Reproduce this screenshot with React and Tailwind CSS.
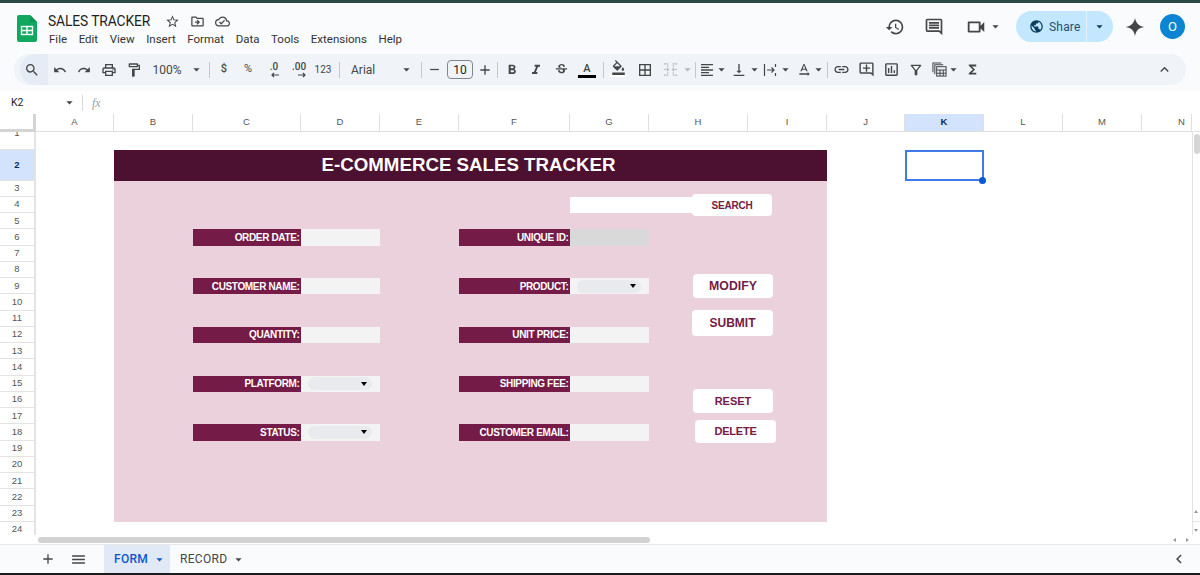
import React from "react";
import {
  MdSearch, MdUndo, MdRedo, MdOutlinePrint, MdOutlineFormatPaint, MdArrowDropDown, MdRemove, MdAdd,
  MdFormatBold, MdFormatItalic, MdStrikethroughS, MdOutlineFormatColorFill, MdBorderAll, MdFormatAlignLeft,
  MdVerticalAlignBottom, MdTextRotationNone, MdLink, MdOutlineAddComment, MdOutlineInsertChart, MdOutlineFilterAlt,
  MdFunctions, MdKeyboardArrowUp, MdHistory, MdOutlineInsertComment, MdOutlineVideocam, MdPublic, MdStarBorder,
  MdOutlineDriveFileMove, MdOutlineCloudDone, MdMenu, MdChevronLeft,
} from "react-icons/md";

const COLS = ["A", "B", "C", "D", "E", "F", "G", "H", "I", "J", "K", "L", "M", "N"];
const MENU = ["File", "Edit", "View", "Insert", "Format", "Data", "Tools", "Extensions", "Help"];
const ROWS = Array.from({ length: 24 }, (_, i) => i + 1);

function S({ c = "", children }) {
  return <div className={"flex h-full shrink-0 items-center justify-center " + c}>{children}</div>;
}
function Sep({ c }) {
  return (
    <S c={c}>
      <div className="h-[16px] w-px bg-[#c7c7c7]" />
    </S>
  );
}
function Caret({ c = "w-[10px]", size = 15 }) {
  return (
    <S c={c}>
      <MdArrowDropDown size={size} className="shrink-0" />
    </S>
  );
}

function Decimal({ label, dir }) {
  return (
    <div className="flex flex-col items-center leading-none">
      <span className="text-[10px] leading-[10px] font-medium">{label}</span>
      <svg width="10" height="6" viewBox="0 0 10 6" className={dir === "r" ? "ml-[6px]" : "ml-[2px]"}>
        {dir === "r" ? (
          <path d="M1 3h7M6 1l2 2-2 2" fill="none" stroke="#444746" strokeWidth="1.2" />
        ) : (
          <path d="M9 3H2M4 1L2 3l2 2" fill="none" stroke="#444746" strokeWidth="1.2" />
        )}
      </svg>
    </div>
  );
}

function Toolbar() {
  return (
    <div className="mx-[14px] mt-[9px] flex h-[31px] items-center rounded-full bg-[#f0f4f9] pl-[6px] text-[#444746] [font-family:Roboto,sans-serif]">
      <S c="w-[28px] h-[21px] bg-[#e6ecf5] rounded-l-full pr-[4px]"><MdSearch size={16} /></S>
      <S c="w-[24px]"><MdUndo size={14} /></S>
      <S c="w-[24px]"><MdRedo size={14} /></S>
      <S c="w-[26px]"><MdOutlinePrint size={16} /></S>
      <S c="w-[24px]"><MdOutlineFormatPaint size={16} /></S>
      <S c="w-[42px] text-[12px]">100%</S>
      <Caret c="w-[16px]" />
      <Sep c="w-[10px]" />
      <S c="w-[20px] text-[11px] font-medium">$</S>
      <S c="w-[28px] text-[11px]">%</S>
      <S c="w-[24px]"><Decimal label=".0" dir="l" /></S>
      <S c="w-[26px]"><Decimal label=".00" dir="r" /></S>
      <S c="w-[22px] text-[10px]">123</S>
      <Sep c="w-[10px]" />
      <S c="w-[54px] justify-start pl-[7px] text-[12px]">Arial</S>
      <Caret c="w-[16px]" />
      <Sep c="w-[14px]" />
      <S c="w-[12px]"><MdRemove size={15} className="shrink-0" /></S>
      <S c="w-[40px]">
        <div className="flex h-[19px] w-[26px] items-center justify-center rounded-[4px] border border-[#80868b] text-[12px] text-[#1f1f1f]">10</div>
      </S>
      <S c="w-[10px]"><MdAdd size={16} className="shrink-0" /></S>
      <Sep c="w-[14px]" />
      <S c="w-[16px]"><MdFormatBold size={16} className="shrink-0" /></S>
      <S c="w-[32px]"><MdFormatItalic size={16} /></S>
      <S c="w-[19px]"><MdStrikethroughS size={15} /></S>
      <S c="w-[32px]">
        <div className="flex flex-col items-center">
          <span className="text-[11px] leading-[11px] font-medium mt-[2px]">A</span>
          <div className="mt-[1px] h-[3px] w-[18px] bg-black" />
        </div>
      </S>
      <Sep c="w-px" />
      <S c="w-[28px]">
        <div className="flex flex-col items-center">
          <MdOutlineFormatColorFill size={15} className="-mt-[3px]" />
          <div className="h-[2px] w-[18px] bg-white" />
        </div>
      </S>
      <S c="w-[26px]"><MdBorderAll size={16} /></S>
      <S c="w-[24px]">
        <svg width="15" height="15" viewBox="0 0 16 16" fill="none" stroke="#b4b7bb" strokeWidth="1.2">
          <path d="M1 2h4v3M1 14h4v-3M15 2h-4v3M15 14h-4v-3M1 8h5M4 6l2 2-2 2M15 8h-5M12 6l-2 2 2 2" strokeDasharray="2 .7" />
        </svg>
      </S>
      <S c="w-[10px] text-[#b4b7bb]"><MdArrowDropDown size={15} className="shrink-0" /></S>
      <Sep c="w-[6px]" />
      <S c="w-[18px]"><MdFormatAlignLeft size={16} className="shrink-0" /></S>
      <Caret />
      <S c="w-[18px] ml-[4px]"><MdVerticalAlignBottom size={16} className="shrink-0" /></S>
      <S c="w-[10px] ml-[1px]"><MdArrowDropDown size={15} className="shrink-0" /></S>
      <S c="w-[18px] ml-[2px]">
        <svg width="14" height="14" viewBox="0 0 14 14" fill="none" stroke="#444746" strokeWidth="1.2">
          <path d="M1.5 1v12M12.5 1v3M12.5 10v3M4 7h7M8.5 4.5L11 7l-2.5 2.5" />
        </svg>
      </S>
      <S c="w-[10px] ml-[1px]"><MdArrowDropDown size={15} className="shrink-0" /></S>
      <S c="w-[18px] ml-[5px]"><MdTextRotationNone size={16} className="shrink-0" /></S>
      <Caret />
      <Sep c="w-[8px]" />
      <S c="w-[20px]"><MdLink size={17} /></S>
      <S c="w-[22px] ml-[4px]"><MdOutlineAddComment size={17} /></S>
      <S c="w-[22px] ml-[3px]"><MdOutlineInsertChart size={17} /></S>
      <S c="w-[22px] ml-[3px]"><MdOutlineFilterAlt size={16} /></S>
      <S c="w-[20px] ml-[2px]">
        <svg width="15" height="15" viewBox="0 0 16 16" fill="none" stroke="#444746" strokeWidth="1.1">
          <path d="M3 13V3h9" />
          <path d="M1 11V1h9" />
          <rect x="5" y="5" width="10" height="10" />
          <path d="M5 8.5h10M5 12h10M8.5 8.5V15M12 8.5V15" />
        </svg>
      </S>
      <Caret c="w-[9px]" />
      <S c="w-[20px] ml-[4px]"><MdFunctions size={15} /></S>
      <div className="flex-1" />
      <S c="w-[24px] mr-[10px]"><MdKeyboardArrowUp size={17} /></S>
    </div>
  );
}

function Header() {
  return (
    <div className="h-[88px] shrink-0 bg-[#f9fbfd] pt-[8px] text-[#444746] [font-family:Roboto,sans-serif]">
      <div className="flex h-[34px] items-start pl-[17px] pr-[15px]">
        <svg width="20" height="27" viewBox="0 0 20 27" className="mt-[4px] shrink-0">
          <path d="M2 0h11l7 7v18a2 2 0 0 1-2 2H2a2 2 0 0 1-2-2V2a2 2 0 0 1 2-2z" fill="#10a85f" />
          <path d="M13 0v7h7z" fill="#0c9452" />
          <rect x="4.5" y="11.5" width="11" height="8" fill="none" stroke="#fff" strokeWidth="1.4" />
          <path d="M4.5 15.5h11M10 11.5v8" stroke="#fff" strokeWidth="1.4" />
        </svg>
        <div className="ml-[11px] flex flex-col">
          <div className="flex h-[20px] items-center">
            <span className="w-[115px] text-[13.8px] leading-[20px] tracking-[-0.1px] text-[#1f1f1f]">SALES TRACKER</span>
            <MdStarBorder size={15} className="ml-[2px]" />
            <MdOutlineDriveFileMove size={15} className="ml-[10px]" />
            <MdOutlineCloudDone size={15} className="ml-[10px]" />
          </div>
          <div className="flex gap-[11.6px] pl-px text-[11.5px] leading-[16px] text-[#333]">
            {MENU.map((m) => (
              <span key={m}>{m}</span>
            ))}
          </div>
        </div>
        <div className="flex-1" />
        <div className="flex h-[31px] items-center">
          <MdHistory size={20} />
          <MdOutlineInsertComment size={20} className="ml-[19px]" />
          <MdOutlineVideocam size={22} className="ml-[21px]" />
          <MdArrowDropDown size={15} className="ml-[1px]" />
          <div className="ml-[13px] flex h-[31px] w-[97px] items-center rounded-full bg-[#c2e7ff] text-[#28506e]">
            <div className="flex h-full w-[71px] items-center gap-[5px] border-r border-[#e2f3ff] pl-[13px]">
              <MdPublic size={15} className="shrink-0 text-[#0b3d5c]" />
              <span className="text-[12px] tracking-[0.2px]">Share</span>
            </div>
            <MdArrowDropDown size={15} className="ml-[5px] text-[#0b3d5c]" />
          </div>
          <svg width="20" height="20" viewBox="0 0 24 24" className="ml-[12px]">
            <path d="M12 1C13 7.5 16.5 11 23 12 16.5 13 13 16.5 12 23 11 16.5 7.5 13 1 12 7.5 11 11 7.5 12 1z" fill="#444746" />
          </svg>
          <div className="ml-[15px] flex h-[25px] w-[25px] items-center justify-center rounded-full bg-[#0b84d2] text-[13px] text-white">O</div>
        </div>
      </div>
      <Toolbar />
    </div>
  );
}

function FormulaBar() {
  return (
    <div className="flex h-[23px] shrink-0 items-center bg-white pl-[11px] text-[#1f1f1f] [font-family:Roboto,sans-serif]">
      <span className="w-[51px] text-[10.5px]">K2</span>
      <MdArrowDropDown size={15} className="text-[#444746]" />
      <div className="ml-[5px] h-[16px] w-px bg-[#d9d9d9]" />
      <span className="ml-[9px] text-[12px] italic text-[#9aa0a6] [font-family:'Liberation_Serif',serif]">fx</span>
    </div>
  );
}

function Label({ pos, children }) {
  return (
    <div className={"flex items-center justify-end bg-[#741b47] pr-[1.5px] text-[10px] font-bold tracking-[-0.35px] text-white " + pos}>
      {children}
    </div>
  );
}

function Field({ pos, bg = "bg-[#f3f3f3]", chip = false }) {
  return (
    <div className={"flex items-center " + bg + " " + pos}>
      {chip && (
        <div className="ml-[7px] flex h-[13px] w-[64px] items-center justify-end rounded-full bg-[#e8eaed] pr-[5px]">
          <div className="border-x-[3.5px] border-t-[4px] border-x-transparent border-t-black" />
        </div>
      )}
    </div>
  );
}

function Btn({ pos, text, children }) {
  return (
    <div className={"absolute z-10 flex items-center justify-center rounded-[4px] bg-white font-bold text-[#741b47] " + text + " " + pos}>
      {children}
    </div>
  );
}

function Sheet() {
  return (
    <div className="relative min-h-0 flex-1 overflow-hidden bg-white [font-family:'Liberation_Sans',sans-serif]">
      <div className="grid grid-cols-[36px_78px_79px_108px_79px_79px_111px_79px_99px_79px_78px_79px_79px_79px_50px_8px] grid-rows-[18px_18px_30.5px_repeat(22,16.25px)]">
        <div className="border-r-[3px] border-b-[3px] border-[#d4d4d4]" />
        {COLS.map((c) => (
          <div
            key={c}
            className={
              "flex items-center border-r border-b border-[#dfdfdf] text-[9.5px] " +
              (c === "N" ? "justify-start pl-[36px] " : "justify-center ") +
              (c === "K" ? "bg-[#d3e3fd] font-bold text-[#0b2a5b]" : "text-[#555]")
            }
          >
            {c}
          </div>
        ))}
        <div className="border-b border-[#dfdfdf]" />

        {ROWS.map((r) => (
          <div
            key={r}
            className={
              "col-start-1 flex justify-center overflow-hidden border-r-2 border-b border-[#e3e3e3] text-[9.5px] " +
              (r === 1 ? "items-start" : "items-center ") +
              (r === 2 ? " bg-[#d3e3fd] font-bold text-[#0b2a5b]" : " text-[#555]")
            }
          >
            <span className={r === 1 ? "-mt-[6px]" : ""}>{r}</span>
          </div>
        ))}

        <div className="col-start-3 col-end-11 row-start-3 flex items-center justify-center bg-[#4c1130] pr-[4px] text-[18.7px] font-bold text-white">
          E-COMMERCE SALES TRACKER
        </div>
        <div className="col-start-3 col-end-11 row-start-4 row-end-25 bg-[#ead1dc]" />

        <Field pos="col-start-8 col-end-10 row-start-5" bg="bg-white" />

        <Label pos="col-start-4 row-start-7">ORDER DATE:</Label>
        <Field pos="col-start-5 row-start-7" />
        <Label pos="col-start-7 row-start-7">UNIQUE ID:</Label>
        <Field pos="col-start-8 row-start-7" bg="bg-[#d9d9d9]" />

        <Label pos="col-start-4 row-start-10">CUSTOMER NAME:</Label>
        <Field pos="col-start-5 row-start-10" />
        <Label pos="col-start-7 row-start-10">PRODUCT:</Label>
        <Field pos="col-start-8 row-start-10" chip />

        <Label pos="col-start-4 row-start-13">QUANTITY:</Label>
        <Field pos="col-start-5 row-start-13" />
        <Label pos="col-start-7 row-start-13">UNIT PRICE:</Label>
        <Field pos="col-start-8 row-start-13" />

        <Label pos="col-start-4 row-start-16">PLATFORM:</Label>
        <Field pos="col-start-5 row-start-16" chip />
        <Label pos="col-start-7 row-start-16">SHIPPING FEE:</Label>
        <Field pos="col-start-8 row-start-16" />

        <Label pos="col-start-4 row-start-19">STATUS:</Label>
        <Field pos="col-start-5 row-start-19" chip />
        <Label pos="col-start-7 row-start-19">CUSTOMER EMAIL:</Label>
        <Field pos="col-start-8 row-start-19" />

        <div className="relative col-start-12 row-start-3 border-2 border-[#3f7be8]">
          <div className="absolute -right-[4px] -bottom-[5px] h-[7px] w-[7px] rounded-full bg-[#0b57d0]" />
        </div>

        <div className="col-start-16 row-start-2 row-end-26 border-l border-[#e3e3e3]">
          <div className="mx-auto mt-[2px] h-[20px] w-[6px] rounded-full bg-[#d6d6d6]" />
        </div>
      </div>

      <Btn pos="left-[692px] top-[80px] h-[22px] w-[80px]" text="text-[10px] tracking-[-0.2px]">SEARCH</Btn>
      <Btn pos="left-[693px] top-[160px] h-[24px] w-[80px]" text="text-[12.3px]">MODIFY</Btn>
      <Btn pos="left-[692px] top-[196px] h-[26px] w-[81px]" text="text-[12px]">SUBMIT</Btn>
      <Btn pos="left-[693px] top-[275px] h-[24px] w-[80px]" text="text-[11px]">RESET</Btn>
      <Btn pos="left-[695px] top-[306px] h-[23px] w-[81px]" text="text-[11px] tracking-[-0.2px]">DELETE</Btn>

      <div className="absolute right-0 bottom-[3px] flex h-[22px] w-[8px] flex-col items-center justify-between">
        <div className="border-x-[2.5px] border-b-[3px] border-x-transparent border-b-[#999]" />
        <div className="h-px w-full bg-[#e3e3e3]" />
        <div className="border-x-[2.5px] border-t-[3px] border-x-transparent border-t-[#999]" />
      </div>
    </div>
  );
}

function HScroll() {
  return (
    <div className="flex h-[10px] shrink-0 items-center border-b border-[#e8e8e8] bg-white pl-[38px]">
      <div className="h-[6px] w-[612px] rounded-full bg-[#d2d2d2]" />
      <div className="flex-1" />
      <div className="mr-[10px] border-y-[2.5px] border-r-[3px] border-y-transparent border-r-[#999]" />
      <div className="mr-[11px] border-y-[2.5px] border-l-[3px] border-y-transparent border-l-[#999]" />
    </div>
  );
}

function Tabs() {
  return (
    <div className="flex h-[28px] shrink-0 items-center bg-[#f9fbfd] text-[#444746] [font-family:Roboto,sans-serif]">
      <MdAdd size={16} className="ml-[40px]" />
      <MdMenu size={17} className="ml-[14px]" />
      <div className="ml-[17px] flex h-full w-[66px] items-center bg-[#e1e9f7] pl-[10px] text-[12px] font-medium tracking-[0.3px] text-[#0b57d0]">
        FORM
        <MdArrowDropDown size={15} className="ml-[4px]" />
      </div>
      <div className="flex h-full items-center pl-[10px] text-[12px] tracking-[0.3px]">
        RECORD
        <MdArrowDropDown size={15} className="ml-[4px]" />
      </div>
      <div className="flex-1" />
      <MdChevronLeft size={18} className="mr-[12px]" />
    </div>
  );
}

export default function App() {
  return (
    <div className="flex h-[575px] w-[1200px] flex-col overflow-hidden bg-white">
      <div className="h-[3px] shrink-0 bg-[#2b4a45]" />
      <Header />
      <FormulaBar />
      <Sheet />
      <HScroll />
      <Tabs />
      <div className="h-[2px] shrink-0 bg-[#1c1c1c]" />
    </div>
  );
}
